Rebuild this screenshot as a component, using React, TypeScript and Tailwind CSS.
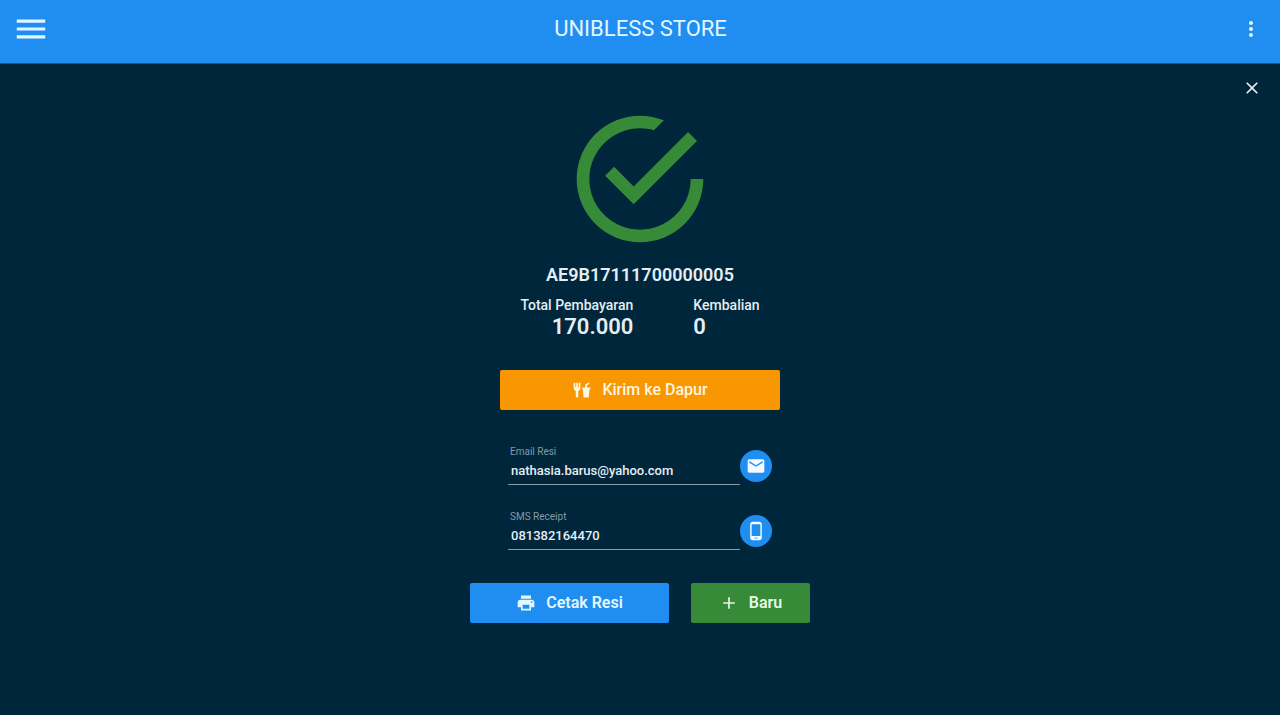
import { useState } from 'react';

const icons = {
  menu: 'M3 18h18v-2H3v2zm0-5h18v-2H3v2zm0-7v2h18V6H3z',
  dots: 'M12 8c1.1 0 2-.9 2-2s-.9-2-2-2-2 .9-2 2 .9 2 2 2zm0 2c-1.1 0-2 .9-2 2s.9 2 2 2 2-.9 2-2-.9-2-2-2zm0 6c-1.1 0-2 .9-2 2s.9 2 2 2 2-.9 2-2-.9-2-2-2z',
  close: 'M19 6.41L17.59 5 12 10.59 6.41 5 5 6.41 10.59 12 5 17.59 6.41 19 12 13.41 17.59 19 19 17.59 13.41 12z',
  success:
    'M20,12A8,8 0 0,1 12,20A8,8 0 0,1 4,12A8,8 0 0,1 12,4C12.76,4 13.5,4.11 14.2,4.31L15.77,2.74C14.61,2.26 13.34,2 12,2A10,10 0 0,0 2,12A10,10 0 0,0 12,22A10,10 0 0,0 22,12M7.91,10.08L6.5,11.5L11,16L21,6L19.59,4.58L11,13.17L7.91,10.08Z',
  food: 'M3,3A1,1 0 0,0 2,4V8L2,9.5C2,11.19 3.03,12.63 4.5,13.22V19.5A1.5,1.5 0 0,0 6,21A1.5,1.5 0 0,0 7.5,19.5V13.22C8.97,12.63 10,11.19 10,9.5V8L10,4A1,1 0 0,0 9,3A1,1 0 0,0 8,4V8A0.5,0.5 0 0,1 7.5,8.5A0.5,0.5 0 0,1 7,8V4A1,1 0 0,0 6,3A1,1 0 0,0 5,4V8A0.5,0.5 0 0,1 4.5,8.5A0.5,0.5 0 0,1 4,8V4A1,1 0 0,0 3,3M19.88,3C19.75,3 19.62,3.09 19.5,3.16L16,5.25V9H12V11H13L14,21H20L21,11H22V9H18V6.34L20.5,4.84C21,4.56 21.13,4 20.84,3.5C20.63,3.14 20.26,2.95 19.88,3Z',
  mail: 'M20 4H4c-1.1 0-1.99.9-1.99 2L2 18c0 1.1.9 2 2 2h16c1.1 0 2-.9 2-2V6c0-1.1-.9-2-2-2zm0 4l-8 5-8-5V6l8 5 8-5v2z',
  phone:
    'M16 1H8C6.34 1 5 2.34 5 4v16c0 1.66 1.34 3 3 3h8c1.66 0 3-1.34 3-3V4c0-1.66-1.34-3-3-3zm-2 20h-4v-1h4v1zm3.25-3H6.75V4h10.5v14z',
  print:
    'M19 8H5c-1.66 0-3 1.34-3 3v6h4v4h12v-4h4v-6c0-1.66-1.34-3-3-3zm-3 11H8v-5h8v5zm3-7c-.55 0-1-.45-1-1s.45-1 1-1 1 .45 1 1-.45 1-1 1zm-1-9H6v4h12V3z',
  plus: 'M19 13h-6v6h-2v-6H5v-2h6V5h2v6h6v2z',
};

function Icon({ name, className }: { name: keyof typeof icons; className: string }) {
  return (
    <svg viewBox="0 0 24 24" fill="currentColor" aria-hidden="true" className={className}>
      <path d={icons[name]} />
    </svg>
  );
}

function ReceiptField({
  id,
  label,
  type,
  icon,
  action,
  value,
  onChange,
}: {
  id: string;
  label: string;
  type: string;
  icon: keyof typeof icons;
  action: string;
  value: string;
  onChange: (value: string) => void;
}) {
  return (
    <div className="flex items-center">
      <div className="flex-1 min-w-0 border-b border-[#8c9ea8]">
        <label htmlFor={id} className="block pl-0.5 text-[10px] leading-3 text-[#8599a5]">
          {label}
        </label>
        <input
          id={id}
          type={type}
          value={value}
          onChange={(e) => onChange(e.target.value)}
          className="block w-full h-[26px] pl-[3px] pb-0.5 bg-transparent text-[13px] font-medium text-[#e4eef3] outline-none"
        />
      </div>
      <button
        type="button"
        aria-label={action}
        className="w-8 h-8 shrink-0 rounded-full bg-[#208ef0] text-[#f2faff] flex items-center justify-center"
      >
        <Icon name={icon} className="w-5 h-5" />
      </button>
    </div>
  );
}

export default function App() {
  const [email, setEmail] = useState('nathasia.barus@yahoo.com');
  const [phone, setPhone] = useState('081382164470');

  return (
    <div className="min-h-screen flex flex-col bg-[#00263b] text-[#e4eef3] font-['Roboto','Liberation_Sans',sans-serif]">
      <header className="h-16 pb-1.5 pl-3 pr-[17px] flex items-center justify-between bg-[#208ef0] border-b border-[#0f5a9c] text-[#e2f7ff]">
        <button type="button" aria-label="Menu">
          <Icon name="menu" className="w-[38px] h-[38px]" />
        </button>
        <h1 className="text-[22px] leading-7">UNIBLESS STORE</h1>
        <div className="w-8 flex justify-end">
          <button type="button" aria-label="More">
            <Icon name="dots" className="w-6 h-6" />
          </button>
        </div>
      </header>

      <main className="flex-1 flex flex-col items-center">
        <div className="self-stretch flex justify-end pt-3.5 pr-[18px]">
          <button type="button" aria-label="Close">
            <Icon name="close" className="w-5 h-5" />
          </button>
        </div>

        <Icon name="success" className="w-[152px] h-[152px] mt-[5px] text-[#378a38]" />

        <h2 className="mt-2 text-[18px] leading-6 font-semibold">{'AE9B17111700000005'}</h2>

        <div className="mt-2 flex gap-[60px]">
          <div className="text-right">
            <p className="text-[14px] leading-5 font-medium">Total Pembayaran</p>
            <p className="text-[22px] leading-6 font-semibold">170.000</p>
          </div>
          <div>
            <p className="text-[14px] leading-5 font-medium">Kembalian</p>
            <p className="text-[22px] leading-6 font-semibold">0</p>
          </div>
        </div>

        <button
          type="button"
          className="mt-[31px] w-[280px] h-10 rounded-xs bg-[#f99702] text-[#fff6e0] text-[16px] font-medium flex items-center justify-center gap-2.5"
        >
          <Icon name="food" className="w-5 h-5" />
          Kirim ke Dapur
        </button>

        <div className="mt-9 w-[264px] flex flex-col gap-[26px]">
          <ReceiptField
            id="email"
            label="Email Resi"
            type="email"
            icon="mail"
            action="Kirim email"
            value={email}
            onChange={setEmail}
          />
          <ReceiptField
            id="phone"
            label="SMS Receipt"
            type="tel"
            icon="phone"
            action="Kirim SMS"
            value={phone}
            onChange={setPhone}
          />
        </div>

        <div className="mt-[33px] flex gap-[22px] text-[16px] font-semibold">
          <button
            type="button"
            className="w-[199px] h-10 rounded-xs bg-[#208ef0] text-[#e2f7ff] flex items-center justify-center gap-2.5"
          >
            <Icon name="print" className="w-5 h-5" />
            Cetak Resi
          </button>
          <button
            type="button"
            className="w-[119px] h-10 rounded-xs bg-[#378a38] text-[#e6f8e6] flex items-center justify-center gap-2.5"
          >
            <Icon name="plus" className="w-5 h-5" />
            Baru
          </button>
        </div>
      </main>
    </div>
  );
}
